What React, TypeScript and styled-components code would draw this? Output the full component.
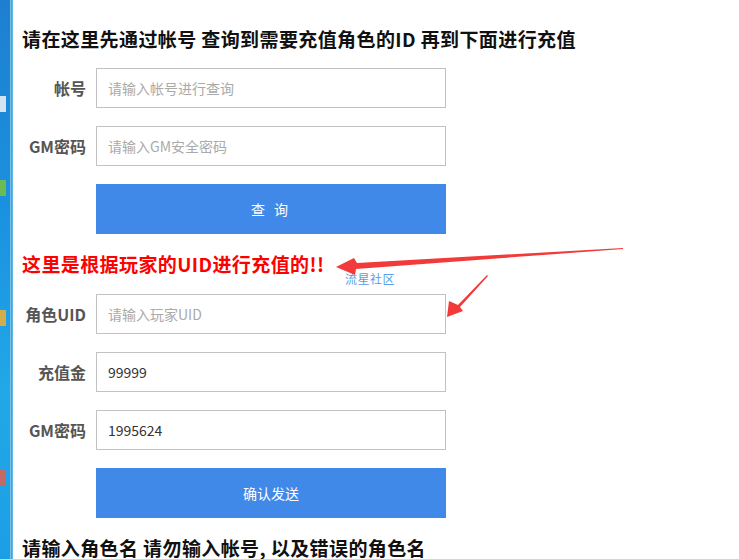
import React from 'react';
import styled, { createGlobalStyle } from 'styled-components';

const GlobalStyle = createGlobalStyle`
  html, body {
    margin: 0;
    padding: 0;
    background: #fff;
  }
  body {
    font-family: "Noto Sans CJK SC", "Noto Sans", sans-serif;
    overflow: hidden;
  }
`;

const queryFields = [
  { label: '帐号', placeholder: '请输入帐号进行查询', value: '' },
  { label: 'GM密码', placeholder: '请输入GM安全密码', value: '' },
];

const chargeFields = [
  { label: '角色UID', placeholder: '请输入玩家UID', value: '' },
  { label: '充值金', placeholder: '', value: '99999' },
  { label: 'GM密码', placeholder: '', value: '1995624' },
];

const FieldRow: React.FC<{ label: string; placeholder: string; value: string }> = ({
  label,
  placeholder,
  value,
}) => (
  <Row>
    <Label>{label}</Label>
    <Input placeholder={placeholder} defaultValue={value} />
  </Row>
);

const App: React.FC = () => {
  return (
    <Screen>
      <GlobalStyle />
      <Desktop>
        <DeskIcon $top={96} $color="#f3f3f3" />
        <DeskIcon $top={180} $color="#7cc23a" />
        <DeskIcon $top={310} $color="#f0b030" />
        <DeskIcon $top={470} $color="#e06050" />
      </Desktop>
      <FrameEdge />
      <Page>
        <Heading>请在这里先通过帐号 查询到需要充值角色的ID 再到下面进行充值</Heading>
        <Form>
          {queryFields.map((f) => (
            <FieldRow key={f.placeholder} {...f} />
          ))}
          <Row>
            <Spacer />
            <Button $spaced>查 询</Button>
          </Row>
        </Form>
        <Notice>这里是根据玩家的UID进行充值的!!</Notice>
        <Form>
          {chargeFields.map((f) => (
            <FieldRow key={f.label + f.value} {...f} />
          ))}
          <Row>
            <Spacer />
            <Button>确认发送</Button>
          </Row>
        </Form>
        <Heading>请输入角色名 请勿输入帐号, 以及错误的角色名</Heading>
      </Page>

      <Watermark>流星社区</Watermark>
      <Arrows width="739" height="559" viewBox="0 0 739 559">
        <polygon
          points="623,248 357,263 354,258 336,267 355,275 356,269 623,249"
          fill="#f23a3a"
        />
        <polygon
          points="487,275 458,305 449,301 447,317 463,311 460,307 488,276"
          fill="#f23a3a"
        />
      </Arrows>
    </Screen>
  );
};

const Screen = styled.div`
  position: relative;
  display: flex;
  width: 739px;
  height: 559px;
  overflow: hidden;
  background: #fff;
`;

const Desktop = styled.div`
  position: relative;
  width: 10px;
  flex-shrink: 0;
  background: linear-gradient(180deg, #1e7fd0 0%, #1a93e0 40%, #22a8e8 70%, #1c9ee4 100%);
`;

const DeskIcon = styled.div<{ $top: number; $color: string }>`
  position: absolute;
  left: 0;
  top: ${(p) => p.$top}px;
  width: 6px;
  height: 16px;
  background: ${(p) => p.$color};
  opacity: 0.85;
`;

const FrameEdge = styled.div`
  width: 3px;
  flex-shrink: 0;
  background: linear-gradient(90deg, #9ccbe8 0%, #3aa6e4 50%, #6cc4ee 100%);
`;

const Page = styled.div`
  flex: 1;
  padding: 26px 0 0 9px;
  display: flex;
  flex-direction: column;
`;

const Heading = styled.div`
  font-size: 19px;
  line-height: 26px;
  font-weight: 700;
  letter-spacing: 0.4px;
  color: #111;
  white-space: nowrap;
`;

const Notice = styled(Heading)`
  color: #ff0000;
  margin: 17px 0 1px;
`;

const Form = styled.div`
  display: flex;
  flex-direction: column;
  gap: 18px;
  margin-top: 16px;

  & + ${Heading} {
    margin-top: 17px;
  }
`;

const Row = styled.div`
  display: flex;
  align-items: center;
  gap: 10px;
`;

const Label = styled.div`
  width: 64px;
  text-align: right;
  font-size: 16px;
  font-weight: 700;
  color: #555;
  white-space: nowrap;
`;

const Spacer = styled.div`
  width: 64px;
`;

const Input = styled.input`
  width: 350px;
  height: 40px;
  box-sizing: border-box;
  border: 1px solid #c2c2c2;
  padding: 0 11px;
  font-family: "Noto Sans CJK SC", "Noto Sans", sans-serif;
  font-size: 14px;
  color: #333;
  outline: none;

  &::placeholder {
    color: #aaa;
  }
`;

const Button = styled.button<{ $spaced?: boolean }>`
  width: 350px;
  height: 50px;
  border: none;
  background: #4189e9;
  color: #fff;
  font-family: "Noto Sans CJK SC", "Noto Sans", sans-serif;
  font-size: 14px;
  letter-spacing: ${(p) => (p.$spaced ? '3px' : '0')};
  white-space: pre;
  cursor: pointer;
`;

const Watermark = styled.div`
  position: absolute;
  left: 345px;
  top: 270px;
  font-size: 12px;
  color: #5a9ee6;
  letter-spacing: 0.5px;
`;

const Arrows = styled.svg`
  position: absolute;
  left: 0;
  top: 0;
  pointer-events: none;
`;

export default App;
